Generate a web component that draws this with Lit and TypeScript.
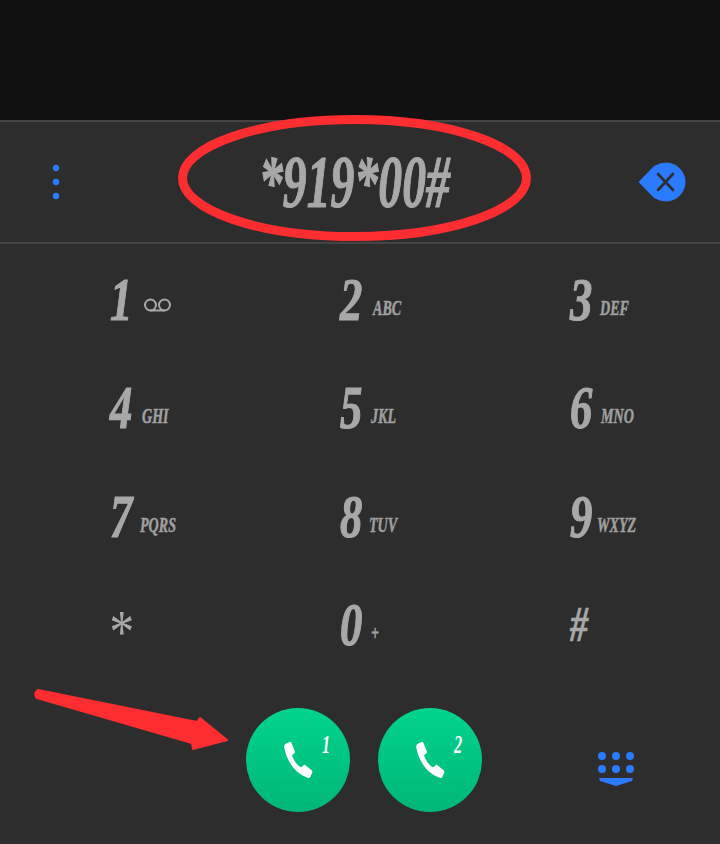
import { LitElement, html, css, svg } from "lit";
import { customElement } from "lit/decorators.js";

const KEYS: [string, string, number][] = [
  ["1", "", 33], ["2", "ABC", 33], ["3", "DEF", 30],
  ["4", "GHI", 32], ["5", "JKL", 31], ["6", "MNO", 31],
  ["7", "PQRS", 30], ["8", "TUV", 29], ["9", "WXYZ", 27],
  ["*", "", 30], ["0", "+", 31], ["#", "", 30],
];

const phone = svg`<path d="M3.2 1.2 L6.6 0 C7.3 -.2 7.9 .1 8.2 .8 L11.4 7.4 C11.7 8 11.5 8.6 11 9 L8.8 10.6 C10.4 14.8 13.6 18.6 17.6 20.6 L19.8 18.7 C20.3 18.3 20.9 18.2 21.4 18.6 L27.7 22.8 C28.4 23.2 28.6 23.9 28.2 24.6 L26.6 27.9 C26.1 28.8 25.4 29.1 24.5 28.9 C12.4 25.8 3.6 16.2 1.1 4.1 C.9 2.7 1.8 1.7 3.2 1.2 Z" fill="#fff"/>`;

@customElement("app-root")
export class AppRoot extends LitElement {
  static styles = css`
    :host { display: block; position: relative; width: 720px; height: 844px; overflow: hidden; background: #2d2d2d;
      font-family: "Liberation Serif", serif; color: #a8a8a8; }
    .status { height: 120px; background: #111; }
    .display { height: 120px; display: flex; align-items: center; border-top: 2px solid #444; border-bottom: 2px solid #444; }
    .more { width: 112px; display: flex; justify-content: center; }
    .number { flex: 1; padding-left: 147px; font-size: 74px; line-height: 120px; font-weight: bold; font-style: italic; white-space: nowrap; -webkit-text-stroke: 1.2px #a8a8a8; }
    .number span { display: inline-block; transform: scaleX(.645); transform-origin: left center; }
    .back { width: 80px; margin-right: 13px; flex: none; }
    .pad { display: grid; grid-template-columns: repeat(3, 230px); grid-auto-rows: 108.3px; padding: 0 0 0 110px; height: 433px; margin-top: 1px; }
    .key { display: flex; align-items: center; }
    .digit { display: inline-block; font-size: 62px; line-height: 1; font-weight: bold; font-style: italic; transform: scaleX(.72); transform-origin: left center; -webkit-text-stroke: 1.2px #a8a8a8; }
    .digit.star { font-size: 62px; transform: translate(-3px, 7px) scaleX(.8); -webkit-text-stroke: 0; font-weight: normal; }
    .digit.hash { font-size: 50px; transform: scaleX(.72); -webkit-text-stroke: .6px #a8a8a8; }
    .digit-wrap { display: block; flex: none; }
    .letters { font-size: 22px; font-weight: bold; font-style: italic; transform: scaleX(.64); transform-origin: left center; padding-top: 18px; white-space: nowrap; color: #a0a0a0; -webkit-text-stroke: .5px #a0a0a0; }
    .vm { margin-top: 12px; display: block; }
    .actions { display: flex; align-items: center; padding-left: 246px; height: 104px; margin-top: 30px; gap: 28px; }
    .call { width: 104px; height: 104px; border-radius: 50%; background: linear-gradient(#00d48d, #00b777); position: relative; display: flex; align-items: center; justify-content: center; }
    .call svg { margin-left: -1px; }
    .sim { position: absolute; left: 76px; top: 24px; color: #fff; font-size: 25px; line-height: 1; font-weight: bold; font-style: italic; transform: scaleX(.65); transform-origin: left top; }
    .dial { margin-left: 87px; margin-top: 18px; display: block; }
    .notes { position: absolute; inset: 0; pointer-events: none; }
  `;

  render() {
    return html`
      <div class="status"></div>
      <div class="display">
        <div class="more">
          <svg width="8" height="38" viewBox="0 0 8 38"><g fill="#2a7bff"><circle cx="4" cy="5" r="3.2"/><circle cx="4" cy="19" r="3.2"/><circle cx="4" cy="33" r="3.2"/></g></svg>
        </div>
        <div class="number"><span>*919*00#</span></div>
        <svg class="back" width="80" height="44" viewBox="0 0 80 44">
          <path d="M12 22 L27 6.6 Q33 3 39 3 A19 19 0 0 1 39 41 Q33 41 27 37.4 Z" fill="#2a7bff" stroke="#2a7bff" stroke-linejoin="round"/>
          <path d="M31 14 L46 30 M46 14 L31 30" stroke="#2d2d2d" stroke-width="2.6" stroke-linecap="round"/>
        </svg>
      </div>
      <div class="pad">
        ${KEYS.map(([d, l, w]) => html`
          <div class="key">
            <div class="digit-wrap" style="width:${w}px"><span class="digit ${d === "*" ? "star" : d === "#" ? "hash" : ""}">${d}</span></div>
            ${d === "1"
              ? html`<svg class="vm" width="30" height="16" viewBox="0 0 30 16" fill="none" stroke="#a8a8a8" stroke-width="2"><circle cx="7.5" cy="8" r="5.5"/><circle cx="21.5" cy="8" r="5.5"/><path d="M7.5 13.5 H21.5"/></svg>`
              : html`<span class="letters">${l}</span>`}
          </div>`)}
      </div>
      <div class="actions">
        <div class="call">
          <svg width="30" height="36" viewBox="0 0 29 29" preserveAspectRatio="none">${phone}</svg>
          <span class="sim">1</span>
        </div>
        <div class="call">
          <svg width="30" height="36" viewBox="0 0 29 29" preserveAspectRatio="none">${phone}</svg>
          <span class="sim">2</span>
        </div>
        <svg class="dial" width="38" height="36" viewBox="0 0 38 36">
          <g fill="#2a7bff">
            <circle cx="5" cy="5" r="4"/><circle cx="19" cy="5" r="4"/><circle cx="33" cy="5" r="4"/>
            <circle cx="5" cy="18" r="4"/><circle cx="19" cy="18" r="4"/><circle cx="33" cy="18" r="4"/>
            <path d="M2 27 H36 L35 30 L19 35 L3 30 Z"/>
          </g>
        </svg>
      </div>
      <svg class="notes" width="720" height="844" viewBox="0 0 720 844">
        <ellipse cx="354.5" cy="178" rx="172" ry="58.5" fill="none" stroke="#ff2d30" stroke-width="9"/>
        <path d="M38 690 L197 722 L200 718 L227 740 L193 749 L192 743 L37 698 Q33 694 38 690 Z" fill="#ff2d30" stroke="#ff2d30" stroke-width="2" stroke-linejoin="round"/>
      </svg>
    `;
  }
}
